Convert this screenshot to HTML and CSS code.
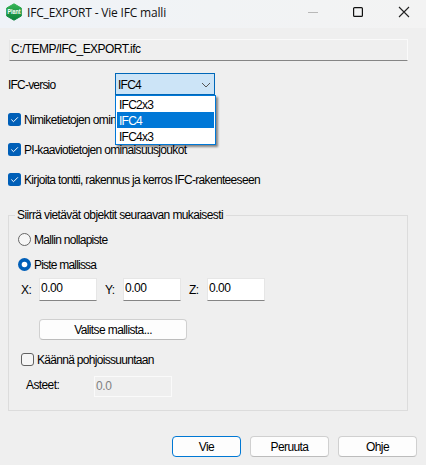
FILE: index.html
```html
<!DOCTYPE html>
<html lang="fi">
<head>
<meta charset="utf-8">
<title>IFC_EXPORT - Vie IFC malli</title>
<link rel="stylesheet" href="styles.css">
</head>
<body>
<header class="titlebar">
  <svg class="logo" width="18" height="18" viewBox="0 0 18 18">
    <defs><linearGradient id="g" x1="0" y1="0" x2="0" y2="1"><stop offset="0" stop-color="#35b455"/><stop offset="1" stop-color="#0c823c"/></linearGradient></defs>
    <path d="M9 .8 16.3 5v8L9 17.2 1.7 13V5z" fill="url(#g)" stroke="url(#g)" stroke-width="1" stroke-linejoin="round"/>
    <text x="9" y="11.4" text-anchor="middle" class="logo-text" textLength="13" lengthAdjust="spacingAndGlyphs">Plant</text>
  </svg>
  <h1 class="title">IFC_EXPORT - Vie IFC malli</h1>
  <svg class="controls" width="102" height="12" viewBox="0 0 102 12" fill="none">
    <path d="M0 6.5h10" stroke="#b8b8b8"/>
    <rect x="45.6" y="1.6" width="8.8" height="8.8" rx="1" stroke="#111" stroke-width="1.2"/>
    <path d="m91 1 10 10M101 1 91 11" stroke="#222" stroke-width="1.1"/>
  </svg>
</header>
<main class="dialog">
  <div class="path"><span class="t-path">C:/TEMP/IFC_EXPORT.ifc</span></div>
  <div class="version">
    <span class="version-label">IFC-versio</span>
    <div class="combo">
      <span>IFC4</span>
      <svg width="10" height="6" viewBox="0 0 10 6" fill="none"><path d="m1 1 4 4 4-4" stroke="#555"/></svg>
      <ul class="menu"><li>IFC2x3</li><li class="selected">IFC4</li><li>IFC4x3</li></ul>
    </div>
  </div>
  <div class="checks">
    <div class="option"><svg class="box" width="13" height="13" viewBox="0 0 13 13"><rect width="13" height="13" rx="2.5" fill="#005fb8"/><path d="m3.3 6.5 2.2 2.2 4.4-4.4" fill="none" stroke="#fff"/></svg><span class="t-nimi">Nimiketietojen omin</span></div>
    <div class="option"><svg class="box" width="13" height="13" viewBox="0 0 13 13"><rect width="13" height="13" rx="2.5" fill="#005fb8"/><path d="m3.3 6.5 2.2 2.2 4.4-4.4" fill="none" stroke="#fff"/></svg><span class="t-pi">PI-kaaviotietojen ominaisuusjoukot</span></div>
    <div class="option"><svg class="box" width="13" height="13" viewBox="0 0 13 13"><rect width="13" height="13" rx="2.5" fill="#005fb8"/><path d="m3.3 6.5 2.2 2.2 4.4-4.4" fill="none" stroke="#fff"/></svg><span class="t-kirj">Kirjoita tontti, rakennus ja kerros IFC-rakenteeseen</span></div>
  </div>
  <section class="group">
    <h2 class="legend"><span class="t-legend">Siirrä vietävät objektit seuraavan mukaisesti</span></h2>
    <div class="option radio"><svg class="box" width="13" height="13" viewBox="0 0 13 13"><circle cx="6.5" cy="6.5" r="6" fill="#f6f6f6" stroke="#666"/></svg><span class="t-mallin">Mallin nollapiste</span></div>
    <div class="option radio"><svg class="box" width="13" height="13" viewBox="0 0 13 13"><circle cx="6.5" cy="6.5" r="6.5" fill="#005fb8"/><circle cx="6.5" cy="6.5" r="2.8" fill="#fff"/></svg><span class="t-piste">Piste mallissa</span></div>
    <div class="coords">
      <span>X:</span><div class="num">0.00</div>
      <span>Y:</span><div class="num">0.00</div>
      <span>Z:</span><div class="num">0.00</div>
    </div>
    <div class="button pick"><span class="t-pick">Valitse mallista...</span></div>
    <div class="option rotate"><svg class="box" width="13" height="13" viewBox="0 0 13 13"><rect x=".5" y=".5" width="12" height="12" rx="2.5" fill="#f6f6f6" stroke="#626262"/></svg><span class="t-rot">Käännä pohjoissuuntaan</span></div>
    <div class="angle"><span class="angle-label">Asteet:</span><div class="angle-value">0.0</div></div>
  </section>
  <footer class="actions">
    <div class="button primary"><span class="t-btn">Vie</span></div>
    <div class="button"><span class="t-btn">Peruuta</span></div>
    <div class="button"><span class="t-btn">Ohje</span></div>
  </footer>
</main>
</body>
</html>
```
FILE: styles.css
```css
* { box-sizing: border-box; }
body {
  margin: 0;
  width: 426px;
  height: 465px;
  overflow: hidden;
  background: #efefef;
  color: #000;
  font: 12px/16px "Liberation Sans", Arial, sans-serif;
  letter-spacing: -0.6px;
  white-space: nowrap;
}
.titlebar {
  display: flex;
  align-items: center;
  height: 28px;
  padding: 0 16px 4px 5px;
  background: linear-gradient(90deg, #eff3f8, #f1f3f5 50%, #f3f3f3);
}
.logo { flex: none; overflow: visible; }
.logo-text { font: bold 7px "Liberation Sans", sans-serif; fill: #fff; letter-spacing: 0; }
.title { margin: 2px 0 0 4px; font: 12px/16px "Open Sans", sans-serif; letter-spacing: -0.18px; color: #111; }
.controls { margin-left: auto; }
.dialog { padding: 11px 9px 0 8px; }
.path {
  width: 399px;
  height: 22px;
  margin-left: 1px;
  padding: 1px 0 0 1px;
  border: 1px solid #fafafa;
  border-left-color: #e5e5e5;
  border-bottom-color: #858585;
}
.t-path { letter-spacing: -0.53px; }
.version { display: flex; height: 22px; margin-top: 12px; align-items: center; }
.version-label { width: 107px; padding-top: 2px; letter-spacing: -0.8px; }
.combo {
  position: relative;
  display: flex;
  justify-content: space-between;
  align-items: center;
  width: 100px;
  height: 22px;
  padding: 1px 3px 0 2px;
  border: 1px solid #0067b8;
  background: #cce4f7;
  letter-spacing: -0.75px;
}
.menu {
  position: absolute;
  left: -1px;
  top: 21px;
  width: 101px;
  margin: 0;
  padding: 0 1px;
  list-style: none;
  border: 1px solid #0078d7;
  background: #fff;
  box-shadow: 2px 2px 2px rgba(0, 0, 0, .45);
}
.menu li { height: 16px; padding-left: 2px; line-height: 18px; }
.menu .selected { color: #fff; background: #0078d7; }
.checks { margin-top: 17px; }
.option { display: flex; align-items: center; height: 15px; gap: 3px; }
.option + .option { margin-top: 15px; }
.option span { padding-top: 1px; }
.t-nimi { letter-spacing: -0.66px; }
.t-pi { letter-spacing: -0.66px; }
.t-kirj { letter-spacing: -0.67px; }
.t-legend { letter-spacing: -0.61px; }
.t-mallin { letter-spacing: -0.7px; }
.t-piste { letter-spacing: -0.8px; }
.t-pick { letter-spacing: -0.6px; }
.t-rot { letter-spacing: -0.7px; }
.t-btn { letter-spacing: -0.6px; }
.box { flex: none; }
.group {
  width: 400px;
  height: 196px;
  margin-top: 28px;
  padding-left: 9px;
  border: 1px solid #dcdcdc;
}
.legend { width: max-content; margin: -9px 0 0 -3px; padding: 0 3px 0 2px; font: inherit; background: #efefef; }
.radio { margin-top: 9px; }
.option.radio + .radio { margin-top: 10px; }
.coords { display: flex; margin-top: 6px; padding-left: 3px; height: 23px; }
.coords span { width: 18px; padding-top: 4px; }
.num {
  width: 58px;
  height: 23px;
  margin-right: 8px;
  padding: 1px;
  border: 1px solid #e6e6e6;
  border-bottom-color: #858585;
  background: #fff;
  letter-spacing: -0.5px;
}
.button {
  display: flex;
  align-items: center;
  justify-content: center;
  width: 79px;
  height: 21px;
  padding-top: 1px;
  border: 1px solid #d0d0d0;
  border-bottom-color: #bcbcbc;
  border-radius: 4px;
  background: #fdfdfd;
}
.pick { width: 148px; margin: 18px 0 0 21px; }
.rotate { margin: 12px 0 0 3px; }
.angle { display: flex; margin-top: 9px; padding-left: 8px; height: 21px; }
.angle-label { width: 68px; padding-top: 1px; }
.angle-value { width: 78px; height: 21px; padding: 1px; border: 1px solid #fafafa; color: #808080; letter-spacing: -0.35px; }
.actions { display: flex; justify-content: flex-end; gap: 9px; margin-top: 25px; }
.primary { width: 69px; border-color: #0078d4; }
```
